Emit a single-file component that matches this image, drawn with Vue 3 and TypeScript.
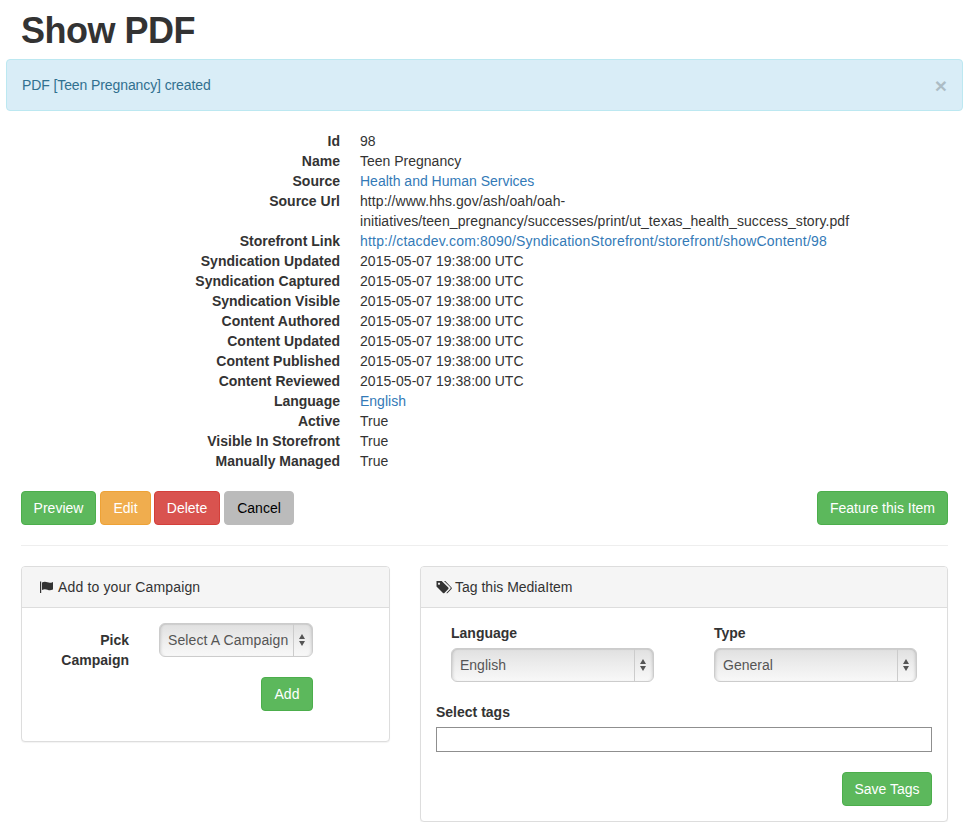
<script setup lang="ts">
const date = '2015-05-07 19:38:00 UTC'
const rows: { label: string; value: string; link?: boolean; cls?: string }[] = [
  { label: 'Id', value: '98' },
  { label: 'Name', value: 'Teen Pregnancy' },
  { label: 'Source', value: 'Health and Human Services', link: true },
  { label: 'Source Url', value: 'http://www.hhs.gov/ash/oah/oah-initiatives/teen_pregnancy/successes/print/ut_texas_health_success_story.pdf', cls: 'url' },
  { label: 'Storefront Link', value: 'http://ctacdev.com:8090/SyndicationStorefront/storefront/showContent/98', link: true, cls: 'store' },
  { label: 'Syndication Updated', value: date, cls: 'date' },
  { label: 'Syndication Captured', value: date, cls: 'date' },
  { label: 'Syndication Visible', value: date, cls: 'date' },
  { label: 'Content Authored', value: date, cls: 'date' },
  { label: 'Content Updated', value: date, cls: 'date' },
  { label: 'Content Published', value: date, cls: 'date' },
  { label: 'Content Reviewed', value: date, cls: 'date' },
  { label: 'Language', value: 'English', link: true },
  { label: 'Active', value: 'True' },
  { label: 'Visible In Storefront', value: 'True' },
  { label: 'Manually Managed', value: 'True' },
]
</script>

<template>
  <div class="page">
    <h1 class="title">Show PDF</h1>
    <div class="alert">
      <span class="alert-text">PDF [Teen Pregnancy] created</span>
      <span class="close">×</span>
    </div>
    <div class="content">
      <dl class="details">
        <template v-for="r in rows" :key="r.label">
          <dt>{{ r.label }}</dt>
          <dd :class="r.cls"><a v-if="r.link" href="#">{{ r.value }}</a><template v-else>{{ r.value }}</template></dd>
        </template>
      </dl>
      <div class="actions">
        <div class="btn-group">
          <button class="btn green b-preview">Preview</button>
          <button class="btn orange b-edit">Edit</button>
          <button class="btn red b-delete">Delete</button>
          <button class="btn grey b-cancel">Cancel</button>
        </div>
        <button class="btn green">Feature this Item</button>
      </div>
      <hr class="rule" />
      <div class="panels">
        <section class="panel left">
          <header class="panel-head">
            <svg class="icon" width="17" height="14" viewBox="0 0 17 14"><path d="M3 1.500h1.200v11.500H3z" fill="#333"/><path d="M5 2.500c2-1 3.500-1 5.500-.2 2 .7 3.200.6 5.500-.4v7.600c-2.300 1-3.500 1.100-5.500.3-2-.8-3.500-.8-5.500.2z" fill="#333"/></svg>
            <span class="head-spaced">Add to your Campaign</span>
          </header>
          <div class="panel-body pick">
            <label class="pick-label">Pick Campaign</label>
            <div class="pick-controls">
              <div class="select-wrap campaign">
                <select><option>Select A Campaign</option></select>
                <span class="arrows"></span>
              </div>
              <button class="btn green b-add">Add</button>
            </div>
          </div>
        </section>
        <section class="panel right">
          <header class="panel-head tag-head">
            <svg class="icon" width="16" height="14" viewBox="0 0 16 14"><path d="M0.500 1h5.200l6.600 6.600a1 1 0 0 1 0 1.400l-3.900 4a1 1 0 0 1-1.400 0L0.500 6.400z M3 2.600a1.100 1.100 0 1 0 .01 0z" fill="#333" fill-rule="evenodd"/><path d="M8 1h1.300l6.200 6.600a1 1 0 0 1 0 1.400l-3.900 4a1 1 0 0 1-1.200.1l3.800-4.100a1.400 1.400 0 0 0 0-2z" fill="#333"/></svg>
            Tag this MediaItem
          </header>
          <div class="panel-body tags">
            <div class="tag-grid">
              <div class="field">
                <label>Language</label>
                <div class="select-wrap wide"><select><option>English</option></select><span class="arrows"></span></div>
              </div>
              <div class="field">
                <label>Type</label>
                <div class="select-wrap wide"><select><option>General</option></select><span class="arrows"></span></div>
              </div>
            </div>
            <label class="tags-label">Select tags</label>
            <input class="tags-input" type="text" />
            <div class="save"><button class="btn green b-save">Save Tags</button></div>
          </div>
        </section>
      </div>
    </div>
  </div>
</template>

<style>
body { background: #fff; }
</style>

<style scoped>
.page {
  width: 971px;
  font-family: "Liberation Sans", Arial, sans-serif;
  font-size: 14px;
  line-height: 20px;
  color: #333;
  box-sizing: border-box;
  padding: 0 8px 0 6px;
}
.title {
  margin: 0;
  padding: 11px 0 0 15px;
  font-size: 36px;
  line-height: 40px;
  letter-spacing: -0.5px;
  box-sizing: border-box;
  height: 59px;
  font-weight: 700;
}
.alert {
  height: 52px;
  box-sizing: border-box;
  display: flex;
  align-items: center;
  justify-content: space-between;
  padding: 0 15px;
  background: #d9edf7;
  border: 1px solid #bce8f1;
  border-radius: 4px;
  color: #31708f;
}
.alert-text { letter-spacing: -0.1px; }
.close {
  font-size: 21px;
  font-weight: 700;
  color: #000;
  opacity: 0.2;
  line-height: 1;
}
.content { padding: 0 15px; margin-top: 20px; }
.details {
  margin: 0 0 0 -21px;
  display: grid;
  grid-template-columns: 340px 588px;
  column-gap: 20px;
  width: 948px;
}
dt { font-weight: 700; text-align: right; }
dd { margin: 0; color: #333; }
.url { letter-spacing: 0.07px; }
.store { letter-spacing: 0.19px; }
.date { letter-spacing: 0.04px; }
a { color: #337ab7; text-decoration: none; }
.actions {
  display: flex;
  justify-content: space-between;
  margin-top: 20px;
}
.btn-group { display: flex; gap: 4px; }
.btn {
  font: inherit;
  height: 34px;
  padding: 0 12px;
  border: 1px solid transparent;
  border-radius: 4px;
  color: #fff;
  cursor: pointer;
}
.b-preview { width: 75px; padding: 0; }
.b-edit { width: 51px; padding: 0; }
.b-delete { width: 66px; padding: 0; margin-left: -1px; }
.b-cancel { width: 70px; padding: 0; }
.b-add { width: 52px; padding: 0; }
.b-save { width: 90px; padding: 0; }
.green { background: #5cb85c; border-color: #4cae4c; }
.orange { background: #f0ad4e; border-color: #eea236; }
.red { background: #d9534f; border-color: #d43f3a; }
.grey { background: #bbb; border-color: #bbb; color: #000; }
.rule {
  margin: 20px 0;
  border: 0;
  border-top: 1px solid #eee;
}
.panels { display: flex; gap: 30px; align-items: flex-start; }
.panel {
  background: #fff;
  border: 1px solid #ddd;
  border-radius: 4px;
  box-shadow: 0 1px 1px rgba(0, 0, 0, 0.05);
  box-sizing: border-box;
}
.left { width: 369px; height: 176px; }
.right { width: 528px; height: 256px; }
.panel-head {
  height: 41px;
  box-sizing: border-box;
  padding: 10px 15px;
  background: #f5f5f5;
  border-bottom: 1px solid #ddd;
  border-radius: 3px 3px 0 0;
  display: flex;
  align-items: center;
  gap: 4px;
}
.tag-head { gap: 3px; }
.head-spaced { letter-spacing: 0.15px; }
.icon { flex: none; }
.pick { display: flex; padding: 15px 15px; }
.pick-label {
  width: 92px;
  margin-top: 7px;
  margin-right: 1px;
  text-align: right;
  font-weight: 700;
  line-height: 20px;
  flex: none;
}
.pick-controls {
  margin-left: 29px;
  width: 154px;
  display: flex;
  flex-direction: column;
  align-items: flex-end;
  gap: 20px;
}
.select-wrap {
  position: relative;
  height: 34px;
  box-sizing: border-box;
}
.campaign { width: 154px; }
.campaign select { letter-spacing: 0.12px; }
.wide { width: 203px; }
.select-wrap select {
  appearance: none;
  -webkit-appearance: none;
  width: 100%;
  height: 100%;
  font: inherit;
  color: #555;
  padding: 0 8px;
  border: 1px solid #ccc;
  border-radius: 6px;
  background: linear-gradient(#e0e0e0 0%, #ececec 45%, #f8f8f8 100%);
  box-shadow: inset 0 1px 1px rgba(0, 0, 0, 0.08), inset 3px 0 3px -2px rgba(0, 0, 0, 0.12), inset -3px 0 3px -2px rgba(0, 0, 0, 0.12);
}
.arrows {
  position: absolute;
  right: 0;
  top: 1px;
  bottom: 1px;
  width: 19px;
  border-left: 1px solid #ccc;
  pointer-events: none;
}
.arrows::before,
.arrows::after {
  content: "";
  position: absolute;
  left: 5px;
  border-left: 3.5px solid transparent;
  border-right: 3.5px solid transparent;
}
.arrows::before { top: 10px; border-bottom: 5px solid #555; }
.arrows::after { top: 17px; border-top: 5px solid #555; }
.tags { padding: 15px; }
.tag-grid {
  display: grid;
  grid-template-columns: 203px 203px;
  column-gap: 60px;
  padding-left: 15px;
}
.field label, .tags-label {
  display: block;
  font-weight: 700;
  margin-bottom: 5px;
}
.tags-label { margin-top: 20px; margin-bottom: 5px; }
.tags-input {
  display: block;
  width: 100%;
  height: 25px;
  box-sizing: border-box;
  border: 1px solid #8f8f8f;
  padding: 0;
  margin: 0;
}
.save { display: flex; justify-content: flex-end; margin-top: 20px; }
</style>
